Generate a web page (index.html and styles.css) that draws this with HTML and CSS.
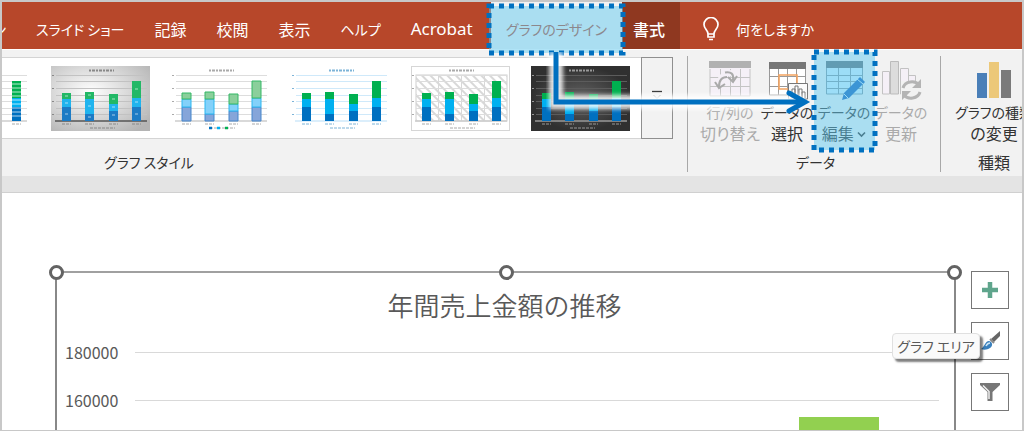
FILE: index.html
```html
<!DOCTYPE html>
<html lang="ja">
<head>
    <meta charset="UTF-8">
    <meta name="viewport" content="width=device-width, initial-scale=1.0">
    <title>グラフのデザイン</title>
    <link rel="stylesheet" href="styles.css">
</head>
<body>
    <!-- shapes shared by the style thumbnails -->
    <svg class="defs" width="0" height="0" aria-hidden="true">
        <symbol id="bars" viewBox="0 0 99 65">
            <path class="bar-dark" d="M11 41h9v14h-9zM34 48h9v7h-9zM58 45h9v10h-9zM81 41h9v14h-9z"/>
            <path class="bar-light" d="M11 33h9v8h-9zM34 33h9v15h-9zM58 38h9v7h-9zM81 32h9v9h-9z"/>
            <path class="bar-green" d="M11 27h9v6h-9zM34 26h9v7h-9zM58 28h9v10h-9zM81 15h9v17h-9z"/>
        </symbol>
        <symbol id="grid" viewBox="0 0 99 65">
            <path class="thumb-grid" d="M5 9.500h91M5 15.500h91M5 22.500h91M5 29.500h91M5 35.500h91M5 42.500h91M5 48.500h91"/>
            <path class="thumb-base" d="M4 55h92"/>
            <path class="thumb-title" d="M38 4.500h25"/>
            <path class="thumb-label" d="M11 58h9M34 58h9M58 58h9M81 58h9M39 62h25M1 9.500h2M1 22.500h2M1 35.500h2M1 48.500h2"/>
        </symbol>
        <pattern id="hatch" width="6" height="6" patternUnits="userSpaceOnUse" patternTransform="rotate(-45)">
            <path d="M1 0v6" stroke="#d8d8d8" stroke-width="2"/>
        </pattern>
        <radialGradient id="silver" cx=".4" cy=".4" r=".75">
            <stop offset="0" stop-color="#fff"/>
            <stop offset="1" stop-color="#b4b4b4"/>
        </radialGradient>
        <radialGradient id="night">
            <stop offset="0" stop-color="#626262"/>
            <stop offset="1" stop-color="#303030"/>
        </radialGradient>
    </svg>

    <div class="window">
        <nav class="tabs">
            <a href="#" class="tab tab-cut kana">ン</a>
            <a href="#" class="tab kana">スライド ショー</a>
            <a href="#" class="tab">記録</a>
            <a href="#" class="tab">校閲</a>
            <a href="#" class="tab">表示</a>
            <a href="#" class="tab kana">ヘルプ</a>
            <a href="#" class="tab latin">Acrobat</a>
            <div class="context-tabs">
                <a href="#" class="tab kana selected">グラフのデザイン
                    <svg class="mark mark-tab" aria-hidden="true">
                        <rect x="3" y="3" width="134" height="47"/>
                    </svg>
                </a>
                <a href="#" class="tab format">書式</a>
            </div>
            <a href="#" class="tell-me">
                <svg width="18" height="24" viewBox="0 0 18 24" aria-hidden="true">
                    <path d="M6 17c0-4-4-5-4-9.500a7 7 0 0 1 14 0C16 12 12 13 12 17zM6 17v3h6v-3M7 22.500h4" fill="none" stroke="#fff" stroke-width="1.700"/>
                </svg>
                <span class="kana">何をしますか</span>
            </a>
        </nav>

        <div class="ribbon">
            <section class="group group-styles">
                <div class="gallery">
                    <div class="thumbs">
                        <button class="thumb thumb-striped" aria-label="スタイル 1">
                            <svg viewBox="0 0 99 65">
                                <use href="#grid"/><use href="#bars"/>
                                <path d="M81 18h9M81 22h9M81 26h9M81 30h9M81 34h9M81 38h9M81 42h9M81 46h9M81 50h9" stroke="#fff" opacity=".7"/>
                            </svg>
                        </button>
                        <button class="thumb thumb-silver" aria-label="スタイル 2">
                            <svg viewBox="0 0 99 65">
                                <rect width="99" height="65" fill="url(#silver)"/>
                                <use href="#grid"/><use href="#bars"/>
                                <path d="M14 48h3M14 37h3M14 30h3M37 51h3M37 40h3M37 29h3M61 49h3M61 41h3M61 33h3M84 48h3M84 36h3M84 23h3" stroke="#fff" opacity=".6"/>
                            </svg>
                        </button>
                        <button class="thumb thumb-pale" aria-label="スタイル 3">
                            <svg viewBox="0 0 99 65">
                                <use href="#grid"/><use href="#bars"/>
                                <path d="M38 62h3" stroke="#0070c0" stroke-width="2.500"/>
                                <path d="M46 62h3" stroke="#00b0f0" stroke-width="2.500"/>
                                <path d="M54 62h3" stroke="#00b050" stroke-width="2.500"/>
                            </svg>
                        </button>
                        <button class="thumb thumb-blue" aria-label="スタイル 4">
                            <svg viewBox="0 0 99 65"><use href="#grid"/><use href="#bars"/></svg>
                        </button>
                        <button class="thumb thumb-hatch" aria-label="スタイル 5">
                            <svg viewBox="0 0 99 65">
                                <rect x=".5" y=".5" width="98" height="64" fill="#fff" stroke="#d6d6d6"/>
                                <rect x="5" y="9" width="91" height="46" fill="url(#hatch)" stroke="#d0d0d0"/>
                                <path d="M27.500 9v46M50.500 9v46M73.500 9v46" stroke="#d8d8d8"/>
                                <use href="#grid"/><use href="#bars"/>
                            </svg>
                        </button>
                        <button class="thumb thumb-night" aria-label="スタイル 6">
                            <svg viewBox="0 0 99 65">
                                <rect width="99" height="65" fill="url(#night)"/>
                                <use href="#grid"/><use href="#bars"/>
                            </svg>
                        </button>
                    </div>
                    <button class="more" aria-label="その他">
                        <svg width="12" height="10" viewBox="0 0 12 10">
                            <path d="M1 1.500h10" stroke="#333" stroke-width="1.300"/>
                            <path d="M2.500 5 6 8.500 9.500 5" fill="none" stroke="#999"/>
                        </svg>
                    </button>
                </div>
                <h2 class="group-name kana">グラフ スタイル</h2>
            </section>

            <section class="group group-data">
                <div class="commands">
                    <button class="command" disabled>
                        <svg width="42" height="38" viewBox="0 0 42 38">
                            <path d="M1 1h40v34H1z" fill="#f5f0f7"/>
                            <path d="M1 8v27h40V8M1 16.500h40M1 25.500h40M11.500 8v27M21.500 8v27M31.500 8v27" fill="none" stroke="#c4c4c4"/>
                            <path d="M0 0h42v7H0z" fill="#b1b1b1"/>
                            <path d="M10 25c0-8 5-14 16-13" fill="none" stroke="#f5f0f7" stroke-width="6"/>
                            <path d="M10 26c0-7 3-10 8-10M16 11.500c6-1 9 1 8 8" fill="none" stroke="#aaa" stroke-width="2.200"/>
                            <path d="m6 21 4 6 6-4M19 16l5 5 4-6" fill="none" stroke="#aaa" stroke-width="2"/>
                        </svg>
                        <span class="kana">行/列の<br><span class="kanji">切り替え</span></span>
                    </button>
                    <button class="command">
                        <svg width="42" height="38" viewBox="0 0 42 38">
                            <path d="M3 1h37v33H3z" fill="#fff"/>
                            <path d="M3.500 7v27h36V7M3 15.500h37M3 25.500h37M12.500 7v27M21.500 7v27M30.500 7v27" fill="none" stroke="#999"/>
                            <path d="M3 1h37v7H3z" fill="#767676"/>
                            <path d="M13 14h18v14H13z" fill="none" stroke="#f4a460" stroke-width="1.600"/>
                            <path d="M22.500 22.500h19V38h-19z" fill="#fafafa" stroke="#777"/>
                            <path d="M26 37v-9h3v9M29 37V25h3v12M33 37v-9h3v9M36 37v-6h3v6" fill="#fff" stroke="#777"/>
                        </svg>
                        <span class="kana">データの<br><span class="kanji">選択</span></span>
                    </button>
                    <button class="command edit-data">
                        <svg width="42" height="40" viewBox="-2 0 42 40">
                            <path d="M1 1h37v33H1z" fill="#d6f0ff"/>
                            <path d="M1.500 7v27h36V7M1 15.500h37M1 21.500h37M1 28.500h37M13.500 7v27M25.500 7v27" fill="none" stroke="#8399a4"/>
                            <path d="M1 1h37v7H1z" fill="#626f76"/>
                            <path d="m17 40 2-7 16-16 5 5-16 16z" fill="#1760bb"/>
                            <path d="m19 34 4 4M32 19l6 5" stroke="#d6f0ff"/>
                        </svg>
                        <span class="kana">データの<br><span class="kanji">編集
                            <svg class="caret" width="9" height="7" viewBox="0 0 9 7"><path d="m1 1.500 3.500 3.500L8 1.500" fill="none" stroke="#333" stroke-width="1.600"/></svg></span>
                        </span>
                        <svg class="mark mark-button" aria-hidden="true">
                            <rect x="3" y="3" width="61" height="98"/>
                        </svg>
                    </button>
                    <button class="command" disabled>
                        <svg width="42" height="40" viewBox="0 0 42 40">
                            <path d="M2.500 11.500h7V34h-7zM20.500 8.500h8V34h-8zM28.500 15.500h7V34h-7z" fill="#f5f0f7" stroke="#c2c2c2"/>
                            <path d="M10.500 1.500h8V34h-8z" fill="#dcdcdc" stroke="#bbb"/>
                            <path d="M21 21h21v19H21z" fill="#f2f2f2"/>
                            <path d="M23 28c2-7 12-8 16-3M40 32c-2 7-12 8-16 3" fill="none" stroke="#b4b4b4" stroke-width="3"/>
                            <path d="M41 19v9h-9zM22 40v-9h9z" fill="#b4b4b4"/>
                        </svg>
                        <span class="kana">データの<br><span class="kanji">更新</span></span>
                    </button>
                </div>
                <h2 class="group-name kana">データ</h2>
            </section>

            <section class="group group-type">
                <div class="commands">
                    <button class="command change-type">
                        <svg width="36" height="38" viewBox="0 0 36 38">
                            <path d="M1 12h10v25H1z" fill="#4a7fb8"/>
                            <path d="M13 1h10v36H13z" fill="#ecc879"/>
                            <path d="M25 9h10v28H25z" fill="#7a7a7a"/>
                        </svg>
                        <span class="kana">グラフの種類<br><span class="kanji">の変更</span></span>
                    </button>
                </div>
                <h2 class="group-name">種類</h2>
            </section>

            <svg class="arrow" width="270" height="72" viewBox="0 0 270 72" aria-hidden="true">
                <path d="M10 0v50h248" class="arrow-glow"/>
                <path d="M10 0v50h248" class="arrow-line"/>
                <path d="m243 41 16 9-16 9" class="arrow-line arrow-head"/>
            </svg>
        </div>

        <main class="slide">
            <div class="chart">
                <i class="handle handle-left"></i>
                <i class="handle handle-middle"></i>
                <i class="handle handle-right"></i>
                <h1>年間売上金額の推移</h1>
                <div class="plot">
                    <div class="tick"><span>180000</span><hr></div>
                    <div class="tick"><span>160000</span><hr></div>
                    <div class="value-bar"></div>
                </div>
                <div class="tooltip kana" role="tooltip">グラフ エリア</div>
            </div>
            <div class="chart-tools">
                <button aria-label="グラフ要素">
                    <svg width="16" height="16" viewBox="0 0 16 16"><path d="M8 0v16M0 8h16" stroke="#5fa58c" stroke-width="4.500"/></svg>
                </button>
                <button aria-label="グラフ スタイル">
                    <svg width="20" height="20" viewBox="0 0 20 20">
                        <path d="M20 0v5l-6 6-3-3z" fill="#666"/>
                        <path d="m10 8 4 4" stroke="#888" stroke-width="2"/>
                        <path d="M1 18c3-1 4-8 8-8 4 1 4 5 1 7s-6 2-9 1z" fill="#3a80bd"/>
                        <path d="M6 15c1-2 2-3 4-3" fill="none" stroke="#cde5f5" stroke-width="1.500"/>
                    </svg>
                </button>
                <button aria-label="グラフ フィルター">
                    <svg width="20" height="20" viewBox="0 0 20 20">
                        <path d="M0 1h20v2l-7.500 7v9h-5v-9L0 3z" fill="#777"/>
                        <path d="m3 3.500 6 6V17" fill="none" stroke="#eee" stroke-width="1.500"/>
                    </svg>
                </button>
            </div>
        </main>
    </div>
</body>
</html>
```
FILE: styles.css
```css
* {
    box-sizing: border-box;
}

body {
    margin: 0;
    font-family: "Noto Sans CJK JP", "Liberation Sans", sans-serif;
    font-size: 16px;
    line-height: 22px;
    color: #333;
}

button {
    font: inherit;
    color: inherit;
    padding: 0;
    border: 0;
    background: none;
}

a {
    color: inherit;
    text-decoration: none;
}

h1, h2 {
    margin: 0;
    font-weight: 400;
}

.defs {
    position: absolute;
}

/* proportional kana, as in UI text */
.kana {
    font-size: 14px;
    font-feature-settings: "palt";
}

.kanji {
    font-size: 16px;
}

.window {
    display: flex;
    flex-direction: column;
    min-height: 100vh;
    border: 2px solid #c8c8c8;
    border-bottom-width: 1px;
    background: #fff;
    overflow: hidden;
}

/* tabs */
.tabs {
    display: flex;
    height: 47px;
    background: #b7472a;
    color: #fff;
}

.tab {
    display: flex;
    align-items: center;
    padding: 6px 15px 0;
    white-space: nowrap;
}

.tab-cut {
    width: 19px;
    padding-left: 0;
    justify-content: flex-end;
}

.latin {
    font-family: "Noto Sans", sans-serif;
    font-size: 17px;
}

.context-tabs {
    display: flex;
    margin-left: 3px;
    background: #8f3820;
}

.selected {
    position: relative;
    background: #f2f2f2;
    color: #b7472a;
}

.format {
    padding-left: 11px;
    font-weight: 500;
}

.tell-me {
    display: flex;
    align-items: center;
    gap: 16px;
    padding: 6px 22px 0;
}

/* dotted call-outs */
.mark {
    position: absolute;
    z-index: 2;
    pointer-events: none;
}

.mark rect {
    fill: rgba(98, 202, 240, .5);
    stroke: #0070c0;
    stroke-width: 5;
    stroke-dasharray: 5 5;
}

.mark-tab {
    left: -5px;
    top: 1px;
    width: 140px;
    height: 53px;
}

.mark-button {
    left: -5px;
    top: -7px;
    width: 67px;
    height: 104px;
}

/* ribbon */
.ribbon {
    position: relative;
    display: flex;
    height: 143px;
    padding-top: 6px;
    background: #f2f2f2;
    border-top: 1px solid #fff;
    border-bottom: 16px solid #e4e4e4;
    box-shadow: 0 1px #d0d0d0;
}

.group {
    display: flex;
    flex-direction: column;
    justify-content: space-between;
    height: 116px;
    flex: none;
    border-right: 1px solid #a8a8a8;
}

.group-styles {
    width: 686px;
}

.group-data {
    width: 253px;
    padding-left: 3px;
}

.group-type {
    flex: 1 1 0;
    min-width: 0;
    padding-left: 25px;
    border-right: 0;
}

.group-name {
    font-size: 16px;
    line-height: 20px;
    text-align: center;
}

.group-name.kana {
    font-size: 14px;
}

.group-styles .group-name {
    padding-left: 102px;
    text-align: left;
}

.gallery {
    display: flex;
    height: 82px;
    width: 671px;
    margin-top: 1px;
}

.thumbs {
    display: flex;
    flex: 1;
    align-items: center;
    justify-content: flex-end;
    gap: 21px;
    padding-right: 11px;
    background: #fff;
    border: solid #d4d4d4;
    border-width: 1px 0;
    overflow: hidden;
}

.thumb {
    --dark: #0070c0;
    --light: #00b0f0;
    --green: #00b050;
    --line: #ddd;
    --base: #ccc;
    --ink: #aaa;
    flex: none;
    width: 99px;
    height: 65px;
}

.thumb svg {
    display: block;
    width: 99px;
    height: 65px;
}

.bar-dark { fill: var(--dark); stroke: var(--edge-dark, none); }
.bar-light { fill: var(--light); stroke: var(--edge-light, none); }
.bar-green { fill: var(--green); stroke: var(--edge-green, none); }
.thumb-grid { stroke: var(--line); }
.thumb-base { stroke: var(--base); stroke-width: 1.5; }
.thumb-title { stroke: var(--ink); stroke-width: 2; stroke-dasharray: 2 1 3 1; }
.thumb-label { stroke: var(--ink); stroke-dasharray: 3 1; }

.thumb-silver {
    --dark: #1c7bc5;
    --light: #20b4ee;
    --green: #22b866;
    --line: #c2c2c2;
    --base: #555;
    --ink: #888;
}

.thumb-pale {
    --dark: #86a5d9;
    --light: #83d1fa;
    --green: #8bcf9b;
    --edge-dark: #4486cc;
    --edge-light: #2bb7f1;
    --edge-green: #35b866;
}

.thumb-blue {
    --line: #cfe9fa;
    --base: #cfe9fa;
    --ink: #7db4d8;
}

.thumb-night {
    --line: #5c5c5c;
    --base: #999;
    --ink: #999;
}

.more {
    display: grid;
    place-items: center;
    width: 32px;
    padding-bottom: 6px;
    border: 1px solid #8f8f8f;
}

.commands {
    display: flex;
    justify-content: center;
}

.command {
    position: relative;
    display: flex;
    flex-direction: column;
    align-items: center;
    gap: 2px;
    width: 57px;
    padding-top: 4px;
    white-space: nowrap;
    line-height: 21px;
}

.command > svg:first-child {
    height: 40px;
}

.command:disabled {
    color: #aaa;
}

.change-type {
    width: 100%;
}

.caret {
    vertical-align: 2px;
}

.arrow {
    position: absolute;
    left: 544px;
    top: 2px;
    z-index: 3;
    fill: none;
}

.arrow-line {
    stroke: #0070c0;
    stroke-width: 5;
}

.arrow-head {
    stroke-linecap: round;
}

.arrow-glow {
    stroke: #fff;
    stroke-width: 14;
    opacity: .85;
    filter: blur(2px);
}

/* slide */
.slide {
    display: flex;
    flex: 1;
    gap: 15px;
    padding: 79px 13px 0 53px;
}

.chart {
    position: relative;
    flex: 1;
    border: 2px solid #888;
    border-top-color: #a0a0a0;
    border-bottom: 0;
    color: #595959;
}

.handle {
    position: absolute;
    top: -8px;
    width: 15px;
    height: 15px;
    border: 3px solid #636363;
    border-radius: 50%;
    background: #fff;
}

.handle-left { left: -8px; }
.handle-middle { left: calc(50% - 7px); }
.handle-right { right: -8px; }

.chart h1 {
    padding: 12px 2px 3px 0;
    font-size: 26px;
    line-height: 40px;
    font-weight: 350;
    text-align: center;
}

.plot {
    padding: 0 15px 0 8px;
}

.tick {
    display: flex;
    align-items: center;
    gap: 17px;
    height: 48px;
}

.tick hr {
    flex: 1;
    margin: 0;
    border: 0;
    border-top: 1px solid #d9d9d9;
}

.value-bar {
    width: 80px;
    height: 13px;
    margin: -7px 60px 0 auto;
    background: #92d050;
}

.tooltip {
    position: absolute;
    right: -26px;
    top: 60px;
    width: 88px;
    border: 1px solid #e0e0e0;
    border-radius: 4px;
    background: #fafafa;
    box-shadow: 3px 3px 2px rgba(0, 0, 0, .5);
    line-height: 24px;
    text-align: center;
    z-index: 1;
}

.chart-tools {
    display: flex;
    flex-direction: column;
    gap: 13px;
}

.chart-tools button {
    display: grid;
    place-items: center;
    width: 38px;
    height: 38px;
    border: 1px solid #777;
}
```
